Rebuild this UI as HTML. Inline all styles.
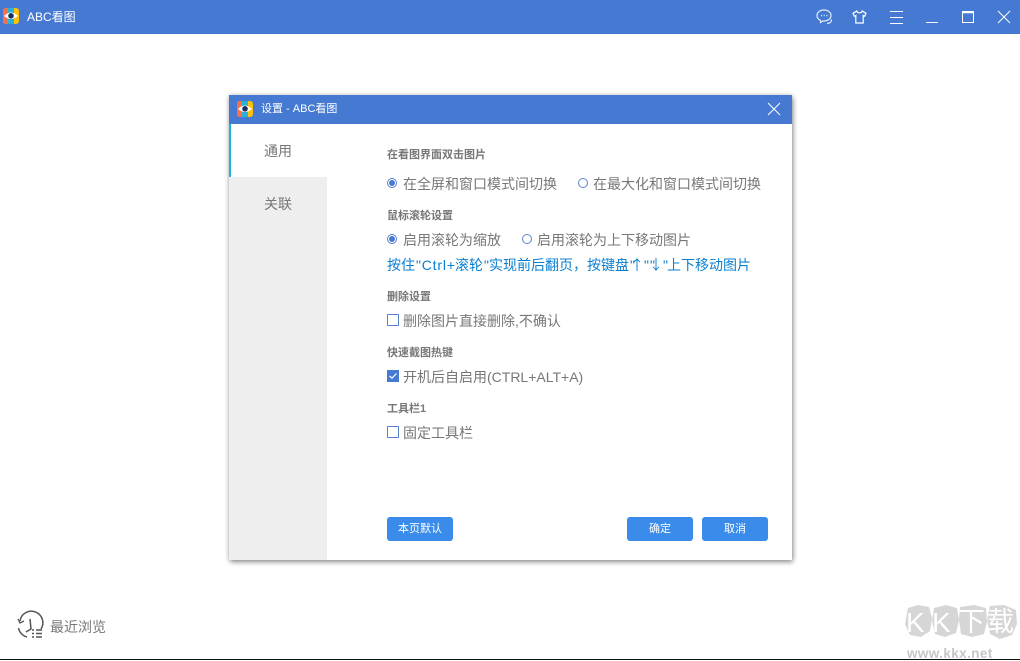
<!DOCTYPE html>
<html lang="zh-CN"><head><meta charset="utf-8"><title>ABC看图</title>
<style>
html,body{margin:0;padding:0;background:#fff}
body{width:1020px;height:660px;position:relative;overflow:hidden;font-family:"Liberation Sans","Noto Sans CJK SC",sans-serif}
.a{position:absolute;white-space:nowrap;line-height:20px}
.h{font-size:11px;color:#777;font-weight:700;height:20px}
.o{font-size:14px;color:#777;height:20px}
.b{font-size:14px;color:#0a7fd0;top:255px}
.ar{font-family:"Noto Sans CJK SC",sans-serif}
.btn{position:absolute;top:517px;width:66px;height:24px;background:#3a8bea;border-radius:3px;color:#fff;font-size:11px;line-height:24px;text-align:center}
.r{position:absolute;width:8px;height:8px;border:1.5px solid #5b83cf;border-radius:50%;background:#fff}
.r.on:after{content:"";position:absolute;left:1px;top:1px;width:6px;height:6px;border-radius:50%;background:#467ad2}
.c{position:absolute;left:387px;width:10px;height:10px;border:1px solid #5b83cf;background:#fff}
svg{position:absolute;overflow:visible}
</style></head><body>
<div class="a" style="left:0;top:0;width:1020px;height:34px;background:#467ad2"></div>
<svg style="left:3px;top:8px" width="16" height="16" viewBox="0 0 16 16"><rect width="16" height="16" rx="3" fill="#ffc107"/><path d="M3 0H5.500V16H3A3 3 0 0 1 0 13V3A3 3 0 0 1 3 0Z" fill="#fb6e4b"/><rect x="5" y="0" width="6" height="16" fill="#27b2d8"/><path d="M1 8Q8 1 15 8Q8 14 1 8Z" fill="#fff"/><circle cx="8" cy="7.800" r="2.800" fill="#1c2f5a"/></svg>
<div class="a" style="left:27px;top:7px;font-size:12px;color:#fff">ABC看图</div>

<svg style="left:816px;top:9px" width="17" height="16" viewBox="0 0 17 16" fill="none" stroke="#e4ecfa" stroke-width="1.200"><path d="M8 1C4 1 1 3.300 1 6.500C1 8.800 2.500 10.500 4.500 11.300L4.500 13.500L7 12C11.500 12.300 15 10 15 6.500C15 3.300 12 1 8 1Z"/><path d="M11 14.500C13 14.500 15.500 13.500 15.500 10.500"/><path d="M5 6.500h1M7.700 6.500h1M10.400 6.500h1" stroke-width="1.400"/></svg>
<svg style="left:852px;top:10px" width="15" height="14" viewBox="0 0 15 14" fill="none" stroke="#fff" stroke-width="1.200"><path d="M4.800 1L1 3.300L2.300 6.300L3.800 5.500V13H11.200V5.500L12.700 6.300L14 3.300L10.200 1C9.800 3.400 5.200 3.400 4.800 1Z"/></svg>
<svg style="left:890px;top:11px" width="13" height="13" viewBox="0 0 13 13" stroke="#fff" stroke-width="1"><path d="M0 .5H13M0 6.500H13M0 12.500H13"/></svg>
<svg style="left:926px;top:22px" width="12" height="1" viewBox="0 0 12 1"><rect width="12" height="1" fill="#fff"/></svg>
<svg style="left:962px;top:11px" width="12" height="12" viewBox="0 0 12 12" fill="none" stroke="#fff"><rect x=".5" y=".5" width="11" height="11"/><path d="M0 1.500H12" stroke-width="1.500"/></svg>
<svg style="left:998px;top:11px" width="12" height="12" viewBox="0 0 12 12" stroke="#fff" stroke-width="1"><path d="M0 0L12 12M12 0L0 12"/></svg>

<div class="a" style="left:229px;top:95px;width:563px;height:465px;background:#fff;box-shadow:1px 2px 5px rgba(0,0,0,.42),0 0 5px rgba(0,0,0,.12)"></div>
<div class="a" style="left:229px;top:95px;width:563px;height:29px;background:#467ad2"></div>
<svg style="left:237px;top:101px" width="16" height="16" viewBox="0 0 16 16"><rect width="16" height="16" rx="3" fill="#ffc107"/><path d="M3 0H5.500V16H3A3 3 0 0 1 0 13V3A3 3 0 0 1 3 0Z" fill="#fb6e4b"/><rect x="5" y="0" width="6" height="16" fill="#27b2d8"/><path d="M1 8Q8 1 15 8Q8 14 1 8Z" fill="#fff"/><circle cx="8" cy="7.800" r="2.800" fill="#1c2f5a"/></svg>
<div class="a" style="left:261px;top:99px;font-size:11px;color:#fff">设置 - ABC看图</div>
<svg style="left:768px;top:103px" width="12" height="12" viewBox="0 0 12 12" stroke="#fff" stroke-width="1"><path d="M0 0L12 12M12 0L0 12"/></svg>

<div class="a" style="left:229px;top:124px;width:2px;height:53px;background:#22b1e0"></div>
<div class="a" style="left:229px;top:177px;width:98px;height:383px;background:#eee"></div>
<div class="a" style="left:264px;top:141px;font-size:14px;color:#777">通用</div>
<div class="a" style="left:264px;top:194px;font-size:14px;color:#777">关联</div>

<div class="a h" style="left:387px;top:145px">在看图界面双击图片</div>
<div class="r on" style="left:387px;top:178px"></div>
<div class="a o" style="left:403px;top:174px">在全屏和窗口模式间切换</div>
<div class="r" style="left:578px;top:178px"></div>
<div class="a o" style="left:593px;top:174px">在最大化和窗口模式间切换</div>

<div class="a h" style="left:387px;top:206px">鼠标滚轮设置</div>
<div class="r on" style="left:387px;top:234px"></div>
<div class="a o" style="left:403px;top:230px">启用滚轮为缩放</div>
<div class="r" style="left:522px;top:234px"></div>
<div class="a o" style="left:537px;top:230px">启用滚轮为上下移动图片</div>

<div class="a b" style="left:387px">按住</div>
<div class="a b" style="left:416px;letter-spacing:.8px">"Ctrl+</div>
<div class="a b" style="left:455px">滚轮</div>
<div class="a b" style="left:484px">"</div>
<div class="a b" style="left:489px">实现前后翻页，按键盘</div>
<div class="a b" style="left:630px">"</div>
<div class="a b ar" style="left:630px">↑</div>
<div class="a b" style="left:644px;letter-spacing:1px">""</div>
<div class="a b ar" style="left:649px">↓</div>
<div class="a b" style="left:663px">"</div>
<div class="a b" style="left:667px">上下移动图片</div>

<div class="a h" style="left:387px;top:287px">删除设置</div>
<div class="c" style="top:314px"></div>
<div class="a o" style="left:403px;top:311px">删除图片直接删除,不确认</div>

<div class="a h" style="left:387px;top:343px">快速截图热键</div>
<div class="c" style="top:370px;background:#467ad2;border-color:#467ad2"></div>
<svg style="left:389px;top:373px" width="8" height="6" viewBox="0 0 8 6" fill="none" stroke="#fff" stroke-width="1.200"><path d="M.5 3L3 5.200L7.500 .5"/></svg>
<div class="a o" style="left:403px;top:367px">开机后自启用(CTRL+ALT+A)</div>

<div class="a h" style="left:387px;top:399px">工具栏1</div>
<div class="c" style="top:426px"></div>
<div class="a o" style="left:403px;top:423px">固定工具栏</div>

<div class="btn" style="left:387px">本页默认</div>
<div class="btn" style="left:627px">确定</div>
<div class="btn" style="left:702px">取消</div>

<svg style="left:17px;top:613px" width="27" height="27" viewBox="0 0 27 27" fill="none" stroke="#555" stroke-width="1.500"><path d="M3 8A11.500 11.500 0 1 1 24 16"/><path d="M1 6L3 10L7 8" stroke-width="1.300"/><path d="M1.500 15A11.500 11.500 0 0 0 10 24"/><path d="M13 6L14 16L9 19"/><path d="M15 17h2M19 17h6M15 20.500h2M19 20.500h6M15 24h2M19 24h6"/></svg>
<div class="a" style="left:50px;top:617px;font-size:14px;color:#777">最近浏览</div>

<svg style="left:904px;top:604px" width="114" height="36" viewBox="0 0 114 36" fill="#d6d6d6"><path d="M4 4L14 1L25 3L28 14L26 27L17 33L6 31L1 20Z"/><path d="M30 4L42 1L53 4L55 16L52 29L41 33L31 30L28 17Z"/><path d="M56 3L70 1L82 4L83 18L80 30L68 33L57 30L55 16Z"/><path d="M86 2L100 1L112 6L113 20L108 31L96 35L86 30L83 16Z"/></svg>
<div class="a" style="left:906px;top:608px;font-size:28px;line-height:30px;color:#fff">K</div>
<div class="a" style="left:932px;top:608px;font-size:28px;line-height:30px;color:#fff">K</div>
<div class="a" style="left:958px;top:607px;font-size:27px;line-height:30px;color:#fff">下</div>
<div class="a" style="left:987px;top:607px;font-size:27px;line-height:30px;color:#fff">载</div>
<div class="a" style="left:907px;top:647px;font-size:13.500px;line-height:14px;font-weight:700;color:#c6c6c6;letter-spacing:.4px">www.kkx.net</div>
<div class="a" style="left:0;top:659px;width:1020px;height:1px;background:#111"></div>
</body></html>
